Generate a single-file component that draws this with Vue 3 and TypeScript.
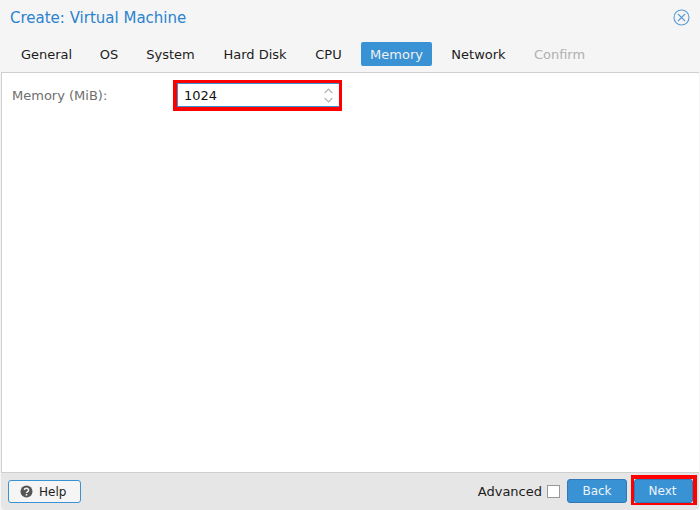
<script setup lang="ts">
interface Tab { label: string; width: number }
const tabs: Tab[] = [
  { label: 'General', width: 69 },
  { label: 'OS', width: 36 },
  { label: 'System', width: 67 },
  { label: 'Hard Disk', width: 82 },
  { label: 'CPU', width: 45 },
  { label: 'Memory', width: 71 },
  { label: 'Network', width: 73 },
  { label: 'Confirm', width: 69 },
]
const active = 'Memory'
const disabled = 'Confirm'
</script>

<template>
  <div class="window">
    <header class="head">
      <span class="title">Create: Virtual Machine</span>
      <svg class="close" width="17" height="17" viewBox="0 0 17 17" fill="none" stroke="#5a9bd5">
        <circle cx="8.5" cy="8.5" r="7.5" stroke-width="1.1" />
        <path d="M5 5l7 7M12 5l-7 7" stroke-width="1.1" />
      </svg>
    </header>
    <nav class="tabs">
      <span
        v-for="t in tabs"
        :key="t.label"
        class="tab"
        :class="{ on: t.label === active, off: t.label === disabled }"
        :style="{ width: t.width + 'px' }"
      >{{ t.label }}</span>
    </nav>
    <main class="panel">
      <div class="row">
        <label class="lbl">Memory (MiB):</label>
        <div class="hl">
          <div class="field">
            <span class="val">1024</span>
            <svg class="spin" width="9" height="15" viewBox="0 0 9 15" fill="none" stroke="#b5b5b5" stroke-width="1.2">
              <path d="M.7 5l3.8-4 3.8 4M.7 10l3.8 4 3.8-4" />
            </svg>
          </div>
        </div>
      </div>
    </main>
    <footer class="foot">
      <button class="help">
        <svg width="13" height="13" viewBox="0 0 13 13">
          <circle cx="6.5" cy="6.5" r="6" fill="#555" />
          <path d="M4.4 5.1a2.1 1.9 0 1 1 3 1.7c-.6.3-.9.6-.9 1.2" fill="none" stroke="#f5f5f5" stroke-width="1.5" />
          <rect x="5.7" y="9" width="1.6" height="1.6" fill="#f5f5f5" />
        </svg>
        <span>Help</span>
      </button>
      <span class="spacer"></span>
      <span class="adv">Advanced</span>
      <span class="check"></span>
      <button class="pri back">Back</button>
      <div class="hl-next">
        <button class="pri next">Next</button>
      </div>
    </footer>
  </div>
</template>

<style>
html, body { margin: 0; background: #fff; }
</style>

<style scoped>
.window {
  width: 700px;
  height: 510px;
  box-sizing: border-box;
  display: flex;
  flex-direction: column;
  background: #f5f5f5;
  font-family: "DejaVu Sans", sans-serif;
  font-size: 13px;
  color: #1c1c1c;
  overflow: hidden;
}
.head {
  height: 36px;
  flex: none;
  box-sizing: border-box;
  display: flex;
  align-items: center;
  justify-content: space-between;
  padding: 0 10px 0 10px;
}
.title { font-size: 15px; color: #2a83cf; }
.close { margin-bottom: 1px; }
.tabs {
  height: 36px;
  flex: none;
  box-sizing: border-box;
  display: flex;
  align-items: flex-start;
  gap: 10px;
  padding: 6px 0 0 12px;
}
.tab {
  height: 24px;
  line-height: 26px;
  text-align: center;
  border-radius: 2px;
  white-space: nowrap;
  flex: none;
}
.tab.on { background: #3892d4; color: #f0f0f0; }
.tab.off { color: #b0b0b0; }
.panel {
  flex: 1;
  margin: 0 1px;
  background: #fff;
  border-top: 1px solid #cfcfcf;
  border-bottom: 1px solid #cfcfcf;
  border-left: 1px solid #cfcfcf;
  padding: 7px 0 0 10px;
}
.row { display: flex; align-items: center; }
.lbl { width: 161px; color: #6e6e6e; margin-bottom: 1px; }
.hl {
  width: 162px;
  height: 24px;
  border-style: solid;
  border-color: #f00;
  border-width: 3px 3px 4px 4px;
}
.field {
  height: 24px;
  box-sizing: border-box;
  border-top: 1px solid #3892d4;
  border-bottom: 1px solid #3892d4;
  border-left: 1px solid #3892d4;
  display: flex;
  align-items: center;
  justify-content: space-between;
  padding: 0 6px 0 6px;
  background: #fff;
  color: #111;
}
.foot {
  height: 37px;
  flex: none;
  box-sizing: border-box;
  margin: 0 1px;
  background: #e6e6e6;
  border-radius: 0 0 4px 4px;
  display: flex;
  align-items: flex-start;
  padding: 6px 2px 0 7px;
}
.foot button {
  font-family: inherit;
  font-size: 12px;
  box-sizing: border-box;
  height: 24px;
  border-radius: 3px;
}
.foot .help {
  width: 73px;
  height: 23px;
  margin-top: 1px;
  background: #f5f5f5;
  border: 1px solid #3892d4;
  color: #1c1c1c;
  display: flex;
  align-items: center;
  gap: 6px;
  padding: 0 0 0 11px;
}
.spacer { flex: 1; }
.adv { margin-right: 5px; line-height: 25px; }
.check {
  width: 11px;
  height: 11px;
  border: 1px solid #999;
  background: #fff;
  margin: 6px 7px 0 0;
}
.pri {
  background: #3892d4;
  border: 1px solid #3078b8;
  color: #eef5fb;
  padding: 0;
}
.back { width: 60px; margin-right: 4px; }
.hl-next {
  margin-top: -4px;
  border-style: solid;
  border-color: #f00;
  border-width: 4px 4px 2px 3px;
  display: flex;
}
.foot .next { width: 59px; padding: 0 2px 0 0; }
</style>
